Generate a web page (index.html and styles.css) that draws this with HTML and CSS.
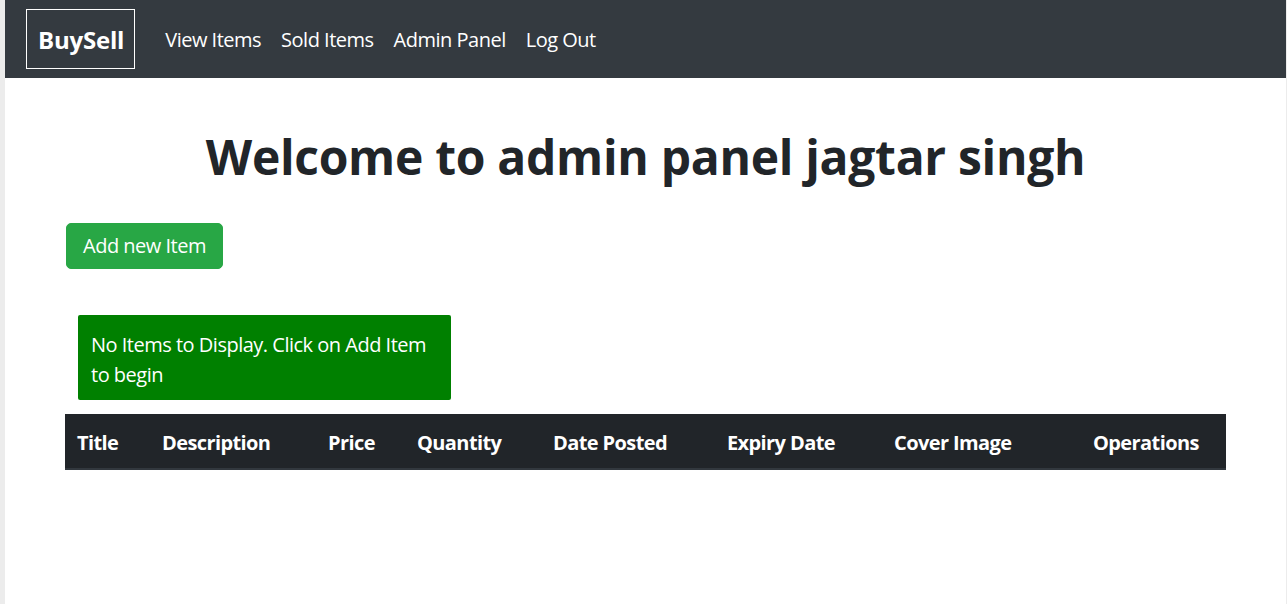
FILE: index.html
```html
<!DOCTYPE html>
<html lang="en">
<head>
<meta charset="utf-8">
<title>BuySell - Admin Panel</title>
<link rel="stylesheet" href="styles.css">
</head>
<body>
<div class="page">
  <nav class="navbar">
    <a class="brand" href="#">BuySell</a>
    <ul class="nav-links">
      <li><a href="#">View Items</a></li>
      <li><a href="#">Sold Items</a></li>
      <li><a href="#">Admin Panel</a></li>
      <li><a href="#">Log Out</a></li>
    </ul>
  </nav>
  <main class="content">
    <h1 class="title">Welcome to admin panel jagtar singh</h1>
    <div class="actions">
      <button class="btn-add" type="button">Add new Item</button>
    </div>
    <div class="notice">No Items to Display. Click on Add Item to begin</div>
    <table class="items">
      <colgroup>
        <col class="c-title">
        <col class="c-desc">
        <col class="c-price">
        <col class="c-qty">
        <col class="c-posted">
        <col class="c-expiry">
        <col class="c-cover">
        <col class="c-ops">
      </colgroup>
      <thead>
        <tr>
          <th>Title</th>
          <th>Description</th>
          <th>Price</th>
          <th>Quantity</th>
          <th>Date Posted</th>
          <th>Expiry Date</th>
          <th>Cover Image</th>
          <th>Operations</th>
        </tr>
      </thead>
      <tbody></tbody>
    </table>
  </main>
</div>
</body>
</html>
```

FILE: styles.css
```css
html, body {
  margin: 0;
  padding: 0;
}
body {
  background: #ececec;
  font-family: "Open Sans", "Noto Sans", sans-serif;
  color: #212529;
  letter-spacing: -0.5px;
}
.page {
  margin: 0 1px 0 5px;
  min-height: 604px;
  background: #ffffff;
}
.navbar {
  display: flex;
  align-items: center;
  height: 78px;
  box-sizing: border-box;
  padding: 0 21px;
  background: #343a40;
}
.brand {
  display: flex;
  align-items: center;
  box-sizing: border-box;
  height: 60px;
  padding: 0 10px 0 11px;
  border: 1px solid #ffffff;
  color: #ffffff;
  font-size: 24px;
  font-weight: 700;
  letter-spacing: -0.2px;
  text-decoration: none;
  margin-right: 20px;
}
.nav-links {
  display: flex;
  list-style: none;
  margin: 0;
  padding: 2px 0 0;
}
.nav-links a {
  display: block;
  padding: 0 10px;
  color: #ffffff;
  font-size: 20px;
  line-height: 30px;
  text-decoration: none;
}
.content {
  padding: 0 60px;
}
.title {
  margin: 50px 0 0;
  text-align: center;
  font-size: 48px;
  line-height: 58px;
  font-weight: 700;
  letter-spacing: -0.3px;
}
.actions {
  margin-top: 37px;
  padding-left: 1px;
}
.btn-add {
  font-family: inherit;
  letter-spacing: inherit;
  font-size: 20px;
  line-height: 30px;
  padding: 7px 16px;
  border: 1px solid #28a745;
  border-radius: 5px;
  background: #28a745;
  color: #ffffff;
  cursor: pointer;
}
.notice {
  box-sizing: border-box;
  width: 373px;
  margin: 46px 0 0 13px;
  padding: 15px 13px 10px;
  background: #008000;
  color: #ffffff;
  font-size: 20px;
  line-height: 30px;
  border-radius: 2px;
}
.items {
  width: 100%;
  margin-top: 14px;
  border-collapse: collapse;
  table-layout: fixed;
}
.items th {
  padding: 14px 12px 10px;
  background: #212529;
  color: #ffffff;
  border-bottom: 2px solid #32383e;
  font-size: 20px;
  line-height: 30px;
  font-weight: 700;
  letter-spacing: -0.6px;
  text-align: left;
  white-space: nowrap;
}
.c-title { width: 85px; }
.c-desc { width: 166px; }
.c-price { width: 89px; }
.c-qty { width: 136px; }
.c-posted { width: 174px; }
.c-expiry { width: 167px; }
.c-cover { width: 199px; }
.c-ops { width: 145px; }
```
